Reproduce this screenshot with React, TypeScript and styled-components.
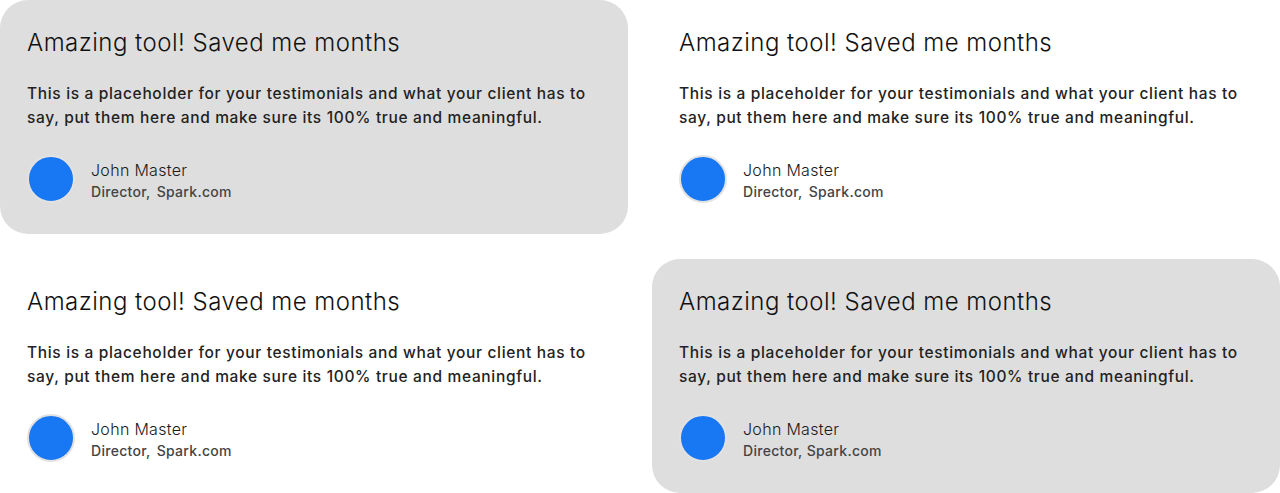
import React from "react";
import styled, { createGlobalStyle } from "styled-components";

const Global = createGlobalStyle`
  html, body { margin: 0; padding: 0; background: #ffffff; }
  body { font-family: Inter, "Open Sans", sans-serif; }
`;

const Grid = styled.div`
  display: grid;
  grid-template-columns: 628px 628px;
  grid-template-rows: 234px 234px;
  column-gap: 24px;
  row-gap: 25px;
  width: 1280px;
`;

const Card = styled.div<{ $filled: boolean }>`
  box-sizing: border-box;
  background: ${(p) => (p.$filled ? "#dedede" : "transparent")};
  border-radius: 28px;
  padding: 25px 27px 0 27px;
  display: flex;
  flex-direction: column;
`;

const Title = styled.h3`
  margin: 0;
  font-family: Inter, sans-serif;
  font-weight: 300;
  font-size: 24px;
  line-height: 36px;
  letter-spacing: 0.48px;
  color: #111;
`;

const Body = styled.p`
  margin: 21px 0 0 0;
  font-family: Inter, sans-serif;
  font-weight: 500;
  font-size: 15.5px;
  line-height: 24px;
  letter-spacing: 0.66px;
  color: #222;
  white-space: nowrap;
`;

const Author = styled.div`
  margin-top: 25px;
  display: flex;
  align-items: center;
  gap: 16px;
`;

const Avatar = styled.div`
  box-sizing: border-box;
  width: 48px;
  height: 48px;
  border-radius: 50%;
  background: #1877f2;
  border: 2px solid #e2e2e2;
  flex: none;
`;

const Meta = styled.div`
  display: flex;
  flex-direction: column;
  gap: 2px;
  margin-top: 4px;
`;

const Name = styled.div`
  font-family: Inter, sans-serif;
  font-weight: 300;
  font-size: 16px;
  line-height: 20px;
  letter-spacing: 0.3px;
  color: #1a1a1a;
`;

const Role = styled.div<{ $wide: boolean }>`
  font-family: Inter, sans-serif;
  font-weight: 500;
  font-size: 14px;
  line-height: 20px;
  letter-spacing: 0.3px;
  color: #444;
  display: flex;
  gap: ${(p) => (p.$wide ? "6px" : "4px")};
`;

const items = [
  { filled: true, wide: true },
  { filled: false, wide: true },
  { filled: false, wide: true },
  { filled: true, wide: false },
];

export default function App() {
  return (
    <>
      <Global />
      <Grid>
        {items.map((it, i) => (
          <Card key={i} $filled={it.filled}>
            <Title>Amazing tool! Saved me months</Title>
            <Body>
              This is a placeholder for your testimonials and what your client has to
              <br />
              say, put them here and make sure its 100% true and meaningful.
            </Body>
            <Author>
              <Avatar />
              <Meta>
                <Name>John Master</Name>
                <Role $wide={it.wide}>
                  <span>Director,</span>
                  <span>Spark.com</span>
                </Role>
              </Meta>
            </Author>
          </Card>
        ))}
      </Grid>
    </>
  );
}
